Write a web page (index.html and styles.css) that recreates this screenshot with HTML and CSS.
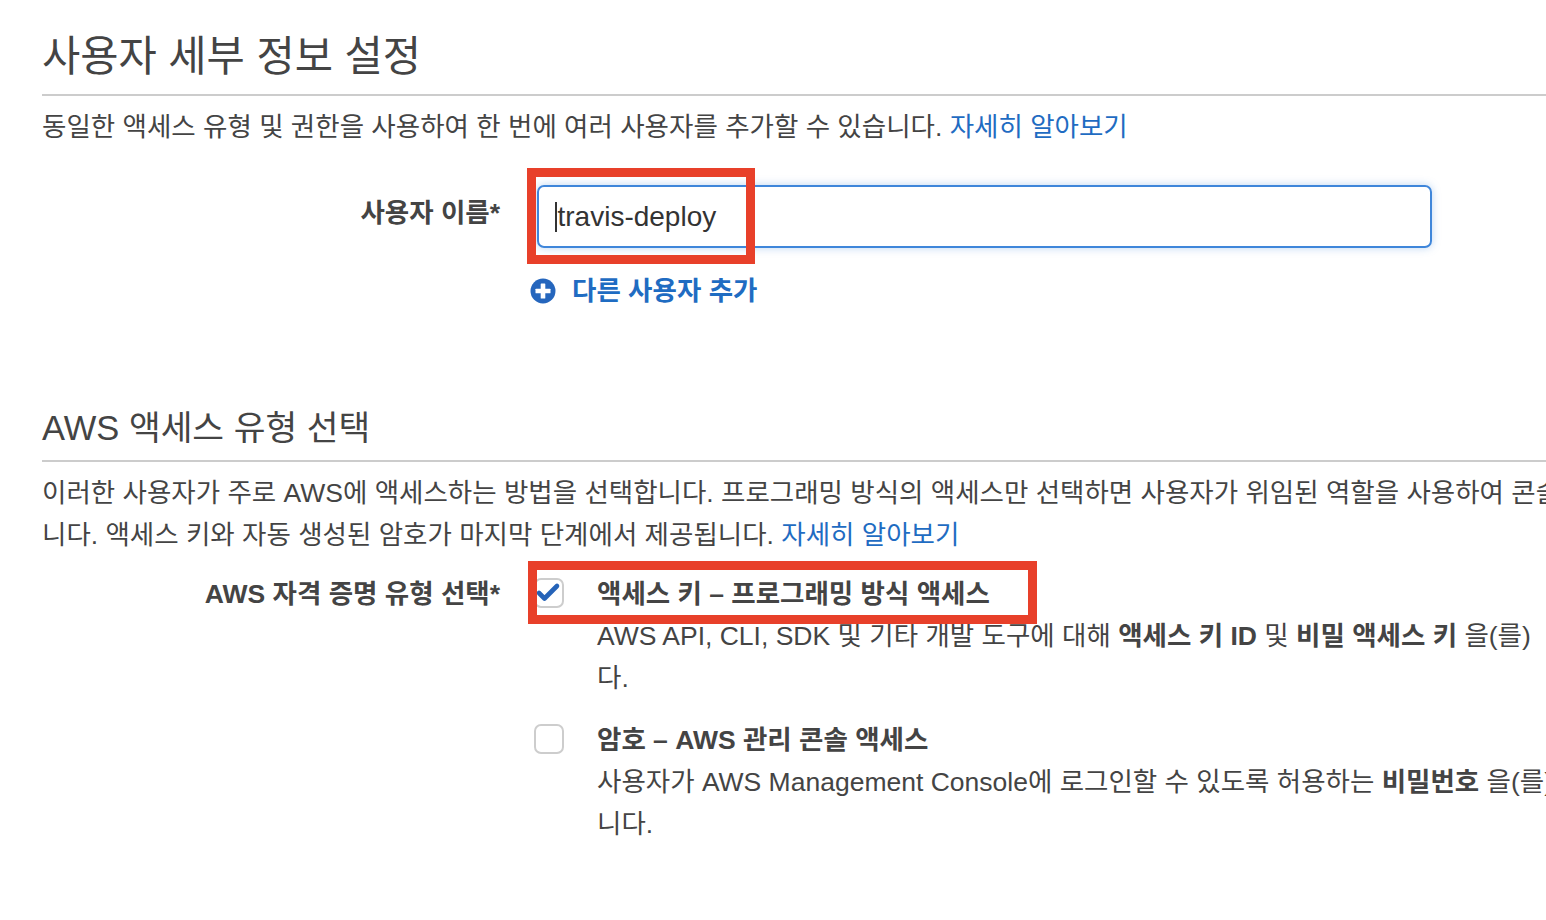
FILE: index.html
```html
<!DOCTYPE html>
<html lang="ko">
<head>
<meta charset="utf-8">
<title>사용자 추가</title>
<link rel="stylesheet" href="styles.css">
</head>
<body>
<div class="page">
  <section class="section">
    <h1 class="title">사용자 세부 정보 설정</h1>
    <p class="desc">동일한 액세스 유형 및 권한을 사용하여 한 번에 여러 사용자를 추가할 수 있습니다. <a class="link" href="#">자세히 알아보기</a></p>
    <div class="form-row user-row">
      <div class="field-label user-label">사용자 이름*</div>
      <div class="field">
        <div class="input-wrap">
          <div class="input"><span class="caret"></span>travis-deploy</div>
          <div class="highlight hl-input"></div>
        </div>
        <a class="add-user" href="#">
          <svg class="plus-icon" width="26" height="26" viewBox="0 0 26 26" aria-hidden="true">
            <circle cx="13" cy="13" r="12.5" fill="#2566bd"/>
            <rect x="10.7" y="5.5" width="4.6" height="15" rx="0.6" fill="#fff"/>
            <rect x="5.5" y="10.7" width="15" height="4.6" rx="0.6" fill="#fff"/>
          </svg>
          <span>다른 사용자 추가</span>
        </a>
      </div>
    </div>
  </section>

  <section class="section access">
    <h2 class="subtitle">AWS 액세스 유형 선택</h2>
    <p class="desc para">이러한 사용자가 주로 AWS에 액세스하는 방법을 선택합니다. 프로그래밍 방식의 액세스만 선택하면 사용자가 위임된 역할을 사용하여 콘솔<br>니다. 액세스 키와 자동 생성된 암호가 마지막 단계에서 제공됩니다. <a class="link" href="#">자세히 알아보기</a></p>
    <div class="form-row cred-row">
      <div class="field-label">AWS 자격 증명 유형 선택*</div>
      <div class="options">
        <div class="option">
          <span class="checkbox">
            <svg class="check" width="30" height="30" viewBox="0 0 30 30" aria-hidden="true">
              <path d="M5 15 L10.5 20.5 L23 8" fill="none" stroke="#2563b8" stroke-width="4.6" stroke-linecap="round" stroke-linejoin="round"/>
            </svg>
          </span>
          <div class="option-body">
            <div class="option-title">액세스 키 – 프로그래밍 방식 액세스</div>
            <div class="option-desc">AWS API, CLI, SDK 및 기타 개발 도구에 대해 <b>액세스 키 ID</b> 및 <b>비밀 액세스 키</b> 을(를)<br>다.</div>
          </div>
          <div class="highlight hl-option"></div>
        </div>
        <div class="option">
          <span class="checkbox"></span>
          <div class="option-body">
            <div class="option-title">암호 – AWS 관리 콘솔 액세스</div>
            <div class="option-desc">사용자가 AWS Management Console에 로그인할 수 있도록 허용하는 <b>비밀번호</b> 을(를)<br>니다.</div>
          </div>
        </div>
      </div>
    </div>
  </section>
</div>
</body>
</html>
```

FILE: styles.css
```css
html, body {
  margin: 0;
  padding: 0;
  background: #fff;
  overflow: hidden;
}

body {
  font-family: "Liberation Sans", "Noto Sans CJK KR", sans-serif;
  color: #444;
  width: 1546px;
  height: 920px;
}

.page {
  width: 1760px;
  padding: 29px 0 0 42px;
}

.title {
  margin: 0;
  font-size: 41.6px;
  font-weight: 400;
  line-height: 56px;
  padding-bottom: 9px;
  border-bottom: 2px solid #ccc;
  color: #444;
}

.desc {
  margin: 10px 0 0;
  font-size: 26.5px;
  line-height: 42px;
  white-space: nowrap;
}

.link {
  color: #1f6cc2;
  text-decoration: none;
}

.form-row {
  display: grid;
  grid-template-columns: 458px 1fr;
  column-gap: 35px;
}

.field-label {
  text-align: right;
  font-size: 26.5px;
  font-weight: 700;
  line-height: 42px;
  white-space: nowrap;
}

.user-row {
  margin-top: 37px;
}

.user-label {
  padding-top: 7px;
}

.field {
  display: flex;
  flex-direction: column;
  align-items: flex-start;
}

.input-wrap {
  position: relative;
  margin-left: 2px;
}

.input {
  box-sizing: border-box;
  width: 895px;
  height: 63px;
  border: 2px solid #3f86da;
  border-radius: 7px;
  box-shadow: 0 0 9px rgba(63, 134, 218, 0.35);
  display: flex;
  align-items: center;
  padding-left: 16px;
  font-size: 28px;
  color: #333;
}

.caret {
  display: inline-block;
  width: 1.5px;
  height: 30px;
  background: #333;
  margin-right: 1px;
}

.highlight {
  position: absolute;
  box-sizing: border-box;
  border: 9.5px solid #e8402a;
  pointer-events: none;
}

.hl-input {
  left: -10px;
  top: -17px;
  width: 228px;
  height: 96px;
}

.add-user {
  display: flex;
  align-items: center;
  gap: 16px;
  margin: 22px 0 0 -5px;
  font-size: 26.5px;
  font-weight: 700;
  line-height: 42px;
  color: #1f6cc2;
  text-decoration: none;
}

.plus-icon {
  display: block;
}

.access {
  margin-top: 93px;
}

.subtitle {
  margin: 0;
  font-size: 34.5px;
  font-weight: 400;
  line-height: 46px;
  padding-bottom: 9px;
  border-bottom: 2px solid #ccc;
  color: #444;
}

.para {
  margin-top: 10px;
}

.cred-row {
  margin-top: 17px;
}

.options {
  display: flex;
  flex-direction: column;
  gap: 20px;
}

.option {
  position: relative;
  display: flex;
  gap: 33px;
  align-items: flex-start;
}

.checkbox {
  position: relative;
  box-sizing: border-box;
  flex: none;
  width: 30px;
  height: 30px;
  margin: 5px 0 0 -1px;
  border: 2px solid #cdcdcd;
  border-radius: 7px;
  background: #fff;
}

.check {
  position: absolute;
  left: -2px;
  top: -2px;
  display: block;
}

.option-body {
  font-size: 26.5px;
  line-height: 42px;
  white-space: nowrap;
}

.option-title {
  font-weight: 700;
}

.option-desc b {
  font-weight: 700;
}

.hl-option {
  left: -7px;
  top: -12px;
  width: 509px;
  height: 63px;
}
```
